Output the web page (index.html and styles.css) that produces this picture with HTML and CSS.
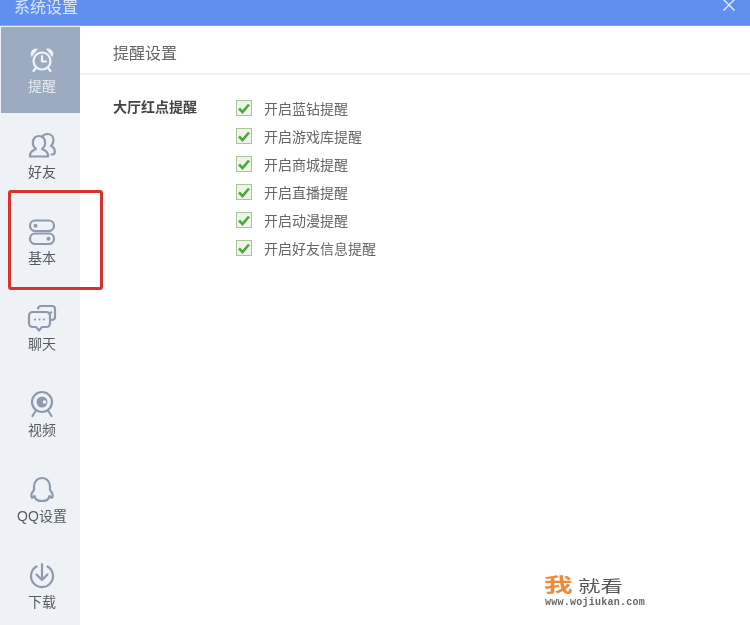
FILE: index.html
```html
<!DOCTYPE html>
<html lang="zh">
<head>
<meta charset="utf-8">
<title>系统设置</title>
<link rel="stylesheet" href="styles.css">
</head>
<body>
<div class="window">
  <header class="titlebar">
    <span class="title">系统设置</span>
    <svg class="close" width="14" height="14" viewBox="0 0 14 14"><path d="M1.500 0.500 12.500 11.500M12.500 0.500 1.500 11.500"/></svg>
  </header>
  <div class="main">
    <nav class="sidebar">
      <div class="nav-item active">
        <svg class="icon" width="28" height="28" viewBox="0 0 28 28"><circle cx="14" cy="15" r="8.500"/><path d="M14 10v5.500h4M7.500 22.500 5.500 25M20.500 22.500 22.500 25"/><path class="ear" d="M3.500 10C2 6 5 2.500 9 3ZM24.500 10C26 6 23 2.500 19 3Z"/></svg>
        <span>提醒</span>
      </div>
      <div class="nav-item">
        <svg class="icon" width="30" height="28" viewBox="0 0 30 28"><path d="M3 24.500c-.5-4 2-6 6-7.500-2.500-2-3.500-4.500-3-7.500.5-3.500 3-5.500 6-5.500s5.500 2 6 5.500c.5 3-.5 5.500-3 7.500 4 1.500 6.500 3.500 6 7.500Z"/><path d="M15 5c1-2 3-3 5.500-3 3.500 0 6 2.500 6 6 0 3-1 4.500-2.500 6 2.500 1 4 3 3.800 6.500 0 1.500-1 2-3.300 2"/></svg>
        <span>好友</span>
      </div>
      <div class="nav-item">
        <svg class="icon" width="28" height="28" viewBox="0 0 28 28"><rect x="2" y="2.500" width="24" height="10.500" rx="5.200"/><rect x="2" y="15.500" width="24" height="10.500" rx="5.200"/><circle class="dot" cx="7.500" cy="7.700" r="2"/><circle class="dot" cx="20.500" cy="20.700" r="2"/></svg>
        <span>基本</span>
      </div>
      <div class="nav-item">
        <svg class="icon" width="30" height="28" viewBox="0 0 30 28"><path d="M6 8h13c2.500 0 4 1.500 4 4v7c0 2.500-1.500 4-4 4h-4l-3 3.500-3-3.500H6c-2.500 0-4-1.500-4-4v-7c0-2.500 1.500-4 4-4Z"/><path d="M11 4.500c.3-1.500 1.500-2.500 3-2.500h11c2 0 3 1 3 3v8c0 2-1 3-3.500 3"/><circle class="dot" cx="8" cy="15.500" r="1.100"/><circle class="dot" cx="12.500" cy="15.500" r="1.100"/><circle class="dot" cx="17" cy="15.500" r="1.100"/><circle class="dot" cx="24" cy="8.500" r="1.300"/></svg>
        <span>聊天</span>
      </div>
      <div class="nav-item">
        <svg class="icon" width="28" height="28" viewBox="0 0 28 28"><circle cx="14" cy="12" r="10"/><circle class="dot" cx="14" cy="12" r="5.500"/><circle class="hole" cx="16.500" cy="12" r="1.800"/><path d="M8 20.500 4.500 26M20 20.500 23.500 26"/></svg>
        <span>视频</span>
      </div>
      <div class="nav-item">
        <svg class="icon" width="28" height="28" viewBox="0 0 28 28"><path d="M14 2c5 0 8 4 8 9v3c2 2 3 4.500 2.500 7-.5 1.500-2 0-3-1-.3 2-1 3-2.500 4-1.500 1-3.500 1-5 1s-3.500 0-5-1c-1.500-1-2.200-2-2.500-4-1 1-2.500 2.500-3 1-.5-2.500.5-5 2.500-7v-3c0-5 3-9 8-9Z"/></svg>
        <span>QQ设置</span>
      </div>
      <div class="nav-item">
        <svg class="icon" width="28" height="28" viewBox="0 0 28 28"><path d="M8.500 4.500a11 11 0 1 0 11 0"/><path d="M14 2v16M8.500 12.500 14 18l5.500-5.500"/></svg>
        <span>下载</span>
      </div>
    </nav>
    <section class="content">
      <h1 class="content-title">提醒设置</h1>
      <div class="group">
        <div class="group-label">大厅红点提醒</div>
        <ul class="options">
          <li class="option"><span class="checkbox"><svg width="14" height="14" viewBox="0 0 14 14"><path d="M2 7.500 5.500 11 12 3.500"/></svg></span>开启蓝钻提醒</li>
          <li class="option"><span class="checkbox"><svg width="14" height="14" viewBox="0 0 14 14"><path d="M2 7.500 5.500 11 12 3.500"/></svg></span>开启游戏库提醒</li>
          <li class="option"><span class="checkbox"><svg width="14" height="14" viewBox="0 0 14 14"><path d="M2 7.500 5.500 11 12 3.500"/></svg></span>开启商城提醒</li>
          <li class="option"><span class="checkbox"><svg width="14" height="14" viewBox="0 0 14 14"><path d="M2 7.500 5.500 11 12 3.500"/></svg></span>开启直播提醒</li>
          <li class="option"><span class="checkbox"><svg width="14" height="14" viewBox="0 0 14 14"><path d="M2 7.500 5.500 11 12 3.500"/></svg></span>开启动漫提醒</li>
          <li class="option"><span class="checkbox"><svg width="14" height="14" viewBox="0 0 14 14"><path d="M2 7.500 5.500 11 12 3.500"/></svg></span>开启好友信息提醒</li>
        </ul>
      </div>
    </section>
  </div>
  <div class="highlight"></div>
  <div class="watermark">
    <div class="wm-brand"><span class="wm-first">我</span><span class="wm-rest">就看</span></div>
    <div class="wm-url">www.wojiukan.com</div>
  </div>
</div>
</body>
</html>
```

FILE: styles.css
```css
* { box-sizing: border-box; }
html, body { margin: 0; padding: 0; background: #fff; }
.window {
  position: relative;
  width: 750px;
  height: 625px;
  overflow: hidden;
  font-family: "Liberation Sans", "Noto Sans CJK SC", sans-serif;
  color: #555;
  filter: blur(0.45px);
}
.titlebar {
  height: 26px;
  background: #5f90ef;
  display: flex;
  align-items: center;
  justify-content: space-between;
  padding: 0 14px 0 14px;
  border-bottom: 1px solid #7fa8f2;
}
.title { color: #dbe6fa; font-size: 16px; line-height: 16px; margin-top: -10px; }
.close { margin-top: -14px; }
.close path { stroke: #dce7fb; stroke-width: 1.500; fill: none; }
.main { display: flex; height: 599px; }
.sidebar {
  width: 80px;
  flex: none;
  background: #eef2f6;
  padding-top: 1px;
  display: flex;
  flex-direction: column;
}
.nav-item {
  height: 86px;
  flex: none;
  display: flex;
  flex-direction: column;
  align-items: center;
  padding: 19px 0 0 4px;
  font-size: 14px;
  line-height: 16px;
  color: #555b63;
}
.nav-item span { margin-top: 4px; white-space: nowrap; }
.nav-item.active { background: #9dabc0; color: #e6eaf0; margin-left: 1px; margin-right: -1px; padding-left: 2px; }
.icon { display: block; }
.icon path, .icon circle, .icon rect { fill: none; stroke: #8d9aae; stroke-width: 2.200; stroke-linecap: round; stroke-linejoin: round; }
.icon .dot { fill: #8d9aae; stroke: none; }
.icon .hole { fill: #eef2f6; stroke: none; }
.active .icon path, .active .icon circle { stroke: #f2f4f8; }
.active .icon .ear { fill: #f2f4f8; stroke-width: 1; }
.content { flex: 1; min-width: 0; background: #fff; }
.content-title {
  margin: 0;
  height: 49px;
  padding-left: 33px;
  font-size: 16px;
  line-height: 55px;
  font-weight: normal;
  color: #666;
  border-bottom: 2px solid #f1f2f4;
}
.group { display: flex; padding: 19px 0 0 33px; }
.group-label { width: 123px; flex: none; font-size: 14px; line-height: 28px; margin-top: -1px; font-weight: bold; color: #444; }
.options { list-style: none; margin: 0; padding: 0; }
.option { display: flex; align-items: center; height: 28px; font-size: 14px; color: #666; }
.checkbox {
  width: 16px;
  height: 16px;
  margin-right: 12px;
  background: #eef5e8;
  border: 1px solid #a9c79a;
  display: flex;
  align-items: center;
  justify-content: center;
}
.checkbox path { fill: none; stroke: #4fa53a; stroke-width: 2.600; }
.highlight {
  position: absolute;
  left: 8px;
  top: 190px;
  width: 95px;
  height: 100px;
  border: 3px solid #d8322e;
  border-radius: 3px;
}
.watermark { position: absolute; left: 544px; top: 576px; width: 110px; }
.wm-brand { display: flex; align-items: baseline; line-height: 20px; height: 22px; white-space: nowrap; }
.wm-first { display: inline-block; font-size: 19px; font-weight: bold; color: #ee8a35; margin-right: 15px; transform: scaleX(1.5); transform-origin: left; }
.wm-rest { display: inline-block; font-size: 16px; color: #555; transform: scaleX(1.4); transform-origin: left; }
.wm-url { font-family: "Liberation Mono", monospace; font-size: 10px; line-height: 9px; margin-left: 1px; letter-spacing: .25px; color: #666; font-weight: bold; white-space: nowrap; }
```
